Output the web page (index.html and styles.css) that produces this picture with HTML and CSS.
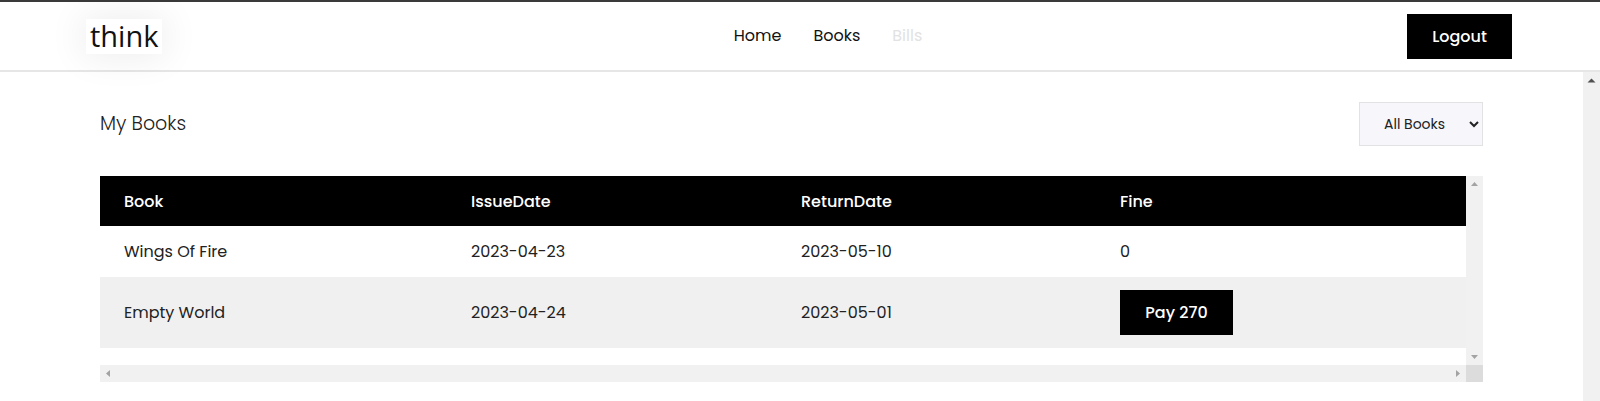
FILE: index.html
```html
<!DOCTYPE html>
<html lang="en">
<head>
<meta charset="utf-8">
<title>think - My Books</title>
<link rel="stylesheet" href="styles.css">
</head>
<body>
<header class="topbar">
  <div class="brand"><span class="brand-text">think</span></div>
  <nav class="nav">
    <a class="nav-link" href="#">Home</a>
    <a class="nav-link" href="#">Books</a>
    <a class="nav-link nav-link--muted" href="#">Bills</a>
  </nav>
  <button class="btn btn-logout">Logout</button>
</header>
<main class="page">
  <div class="page-content">
    <div class="title-row">
      <h1 class="page-title">My Books</h1>
      <select class="filter">
        <option>All Books</option>
      </select>
    </div>
    <div class="table-frame">
      <div class="table-view">
        <table class="books">
          <thead>
            <tr>
              <th class="col-book">Book</th>
              <th class="col-issue">IssueDate</th>
              <th class="col-return">ReturnDate</th>
              <th class="col-fine">Fine</th>
            </tr>
          </thead>
          <tbody>
            <tr class="row-plain">
              <td>Wings Of Fire</td>
              <td>2023-04-23</td>
              <td>2023-05-10</td>
              <td>0</td>
            </tr>
            <tr class="row-shade">
              <td>Empty World</td>
              <td>2023-04-24</td>
              <td>2023-05-01</td>
              <td><button class="btn btn-pay">Pay 270</button></td>
            </tr>
          </tbody>
        </table>
      </div>
      <div class="sb sb-v">
        <svg class="sb-arrow" width="17" height="17" viewBox="0 0 17 17"><polygon points="5,10 8.5,6 12,10" fill="#a3a3a3"/></svg>
        <svg class="sb-arrow" width="17" height="17" viewBox="0 0 17 17"><polygon points="5,7 8.5,11 12,7" fill="#a3a3a3"/></svg>
      </div>
      <div class="sb sb-h">
        <svg class="sb-arrow" width="17" height="17" viewBox="0 0 17 17"><polygon points="10,5 6,8.5 10,12" fill="#a3a3a3"/></svg>
        <svg class="sb-arrow" width="17" height="17" viewBox="0 0 17 17"><polygon points="7,5 11,8.5 7,12" fill="#a3a3a3"/></svg>
      </div>
      <div class="sb-corner"></div>
    </div>
  </div>
  <div class="sb sb-page">
    <svg class="sb-arrow" width="17" height="17" viewBox="0 0 17 17"><polygon points="4.5,10.5 8.5,6.5 12.5,10.5" fill="#505050"/></svg>
  </div>
</main>
</body>
</html>
```
FILE: styles.css
```css
* { box-sizing: border-box; }

html, body {
  margin: 0;
  height: 100%;
  overflow: hidden;
}

body {
  font-family: "Poppins", "Inter", "Open Sans", sans-serif;
  color: #222;
  background: #fff;
}

/* ---------- header ---------- */
.topbar {
  height: 72px;
  border-top: 2px solid #3a3a3a;
  border-bottom: 2px solid #e6e6e6;
  padding: 0 88px 0 86px;
  display: flex;
  align-items: center;
  justify-content: space-between;
}

.brand {
  width: 163px;
  display: flex;
  align-items: center;
}

.brand-text {
  font-family: "Open Sans", "Noto Sans", sans-serif;
  font-size: 29px;
  font-weight: 400;
  color: #111;
  line-height: 30px;
  padding: 2px 4px 3px;
  background: #fff;
  box-shadow: 0 0 36px 4px rgba(0, 0, 0, 0.07);
}

.nav {
  display: flex;
  align-items: center;
  margin-top: -2px;
}

.nav-link {
  font-size: 16px;
  color: #111;
  text-decoration: none;
  padding: 6px 16px;
}

.nav-link--muted {
  color: #e2e2e2;
}

.btn {
  border: none;
  background: #000;
  color: #fff;
  font-family: inherit;
  font-size: 16px;
  font-weight: 500;
  cursor: pointer;
}

.btn-logout {
  width: 105px;
  height: 45px;
}

/* ---------- main area ---------- */
.page {
  height: calc(100vh - 72px);
  display: flex;
  overflow: hidden;
}

.page-content {
  flex: 1;
  min-width: 0;
  padding: 30px 100px 0 100px;
}

/* drawn scrollbars */
.sb {
  background: #f1f1f1;
  display: flex;
  justify-content: space-between;
}

.sb-arrow {
  display: block;
  flex: none;
}

.sb-page {
  width: 17px;
  flex-direction: column;
  justify-content: flex-start;
}

.sb-v {
  flex-direction: column;
}

.sb-corner {
  background: #dcdcdc;
}

.title-row {
  display: flex;
  align-items: center;
  justify-content: space-between;
  height: 44px;
}

.page-title {
  margin: 0 0 2px;
  font-size: 19px;
  font-weight: 300;
  color: #222;
}

.filter {
  width: 124px;
  height: 44px;
  background: #f6f6fb;
  border: 1px solid #e2e2e2;
  border-radius: 0;
  font-family: "Poppins", "Inter", sans-serif;
  font-size: 14px;
  color: #222;
  padding: 0 10px 0 20px;
}

/* ---------- table ---------- */
.table-frame {
  margin-top: 30px;
  display: grid;
  grid-template-columns: 1fr 17px;
  grid-template-rows: 189px 17px;
}

.table-view {
  overflow: hidden;
  background: #fff;
}

.books {
  width: 100%;
  border-collapse: collapse;
  table-layout: fixed;
}

.books th,
.books td {
  text-align: left;
  padding: 0 0 0 24px;
  font-size: 16px;
}

.books th {
  background: #000;
  color: #fff;
  font-weight: 500;
  height: 50px;
}

.col-book { width: 347px; }
.col-issue { width: 330px; }
.col-return { width: 319px; }
.col-fine { width: auto; }

.books td {
  color: #222;
  font-weight: 400;
}

.row-plain td {
  height: 51px;
  background: #fff;
}

.row-shade td {
  height: 71px;
  background: #f0f0f0;
}

.btn-pay {
  width: 113px;
  height: 45px;
}
```
